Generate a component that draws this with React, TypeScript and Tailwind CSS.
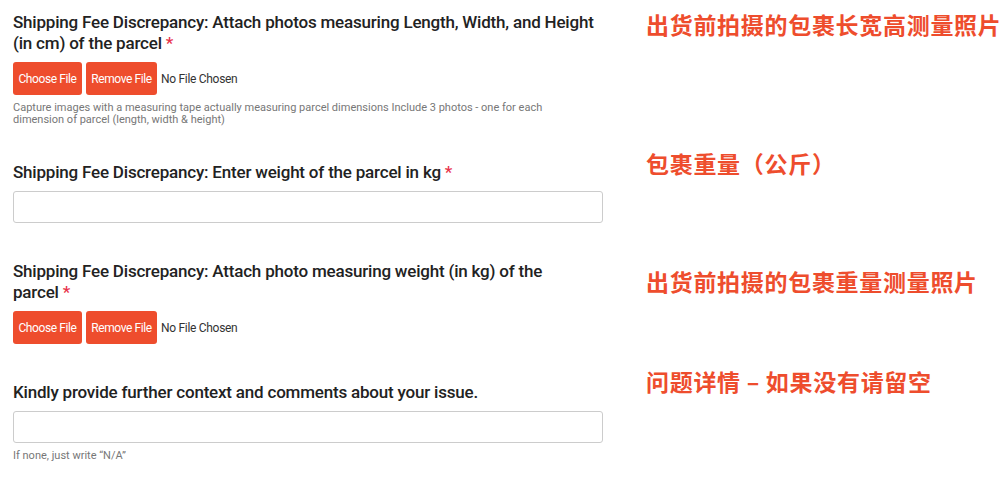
import React from "react";

const Req = () => <span className="text-[#e8334a]"> *</span>;
const Tail = ({ w }: { w: string }) => (
  <span className="whitespace-nowrap">
    {w}
    <Req />
  </span>
);

function FileRow() {
  return (
    <div className="mt-2 flex items-center gap-1">
      <button className="h-[33px] w-[69px] rounded-[3px] bg-[#ee4d2d] text-[12px] tracking-[-0.4px] text-white">Choose File</button>
      <button className="h-[33px] w-[71px] rounded-[3px] bg-[#ee4d2d] text-[12px] tracking-[-0.4px] text-white">Remove File</button>
      <span className="text-[12px] tracking-[-0.3px] text-[#333]">No File Chosen</span>
    </div>
  );
}

function Input() {
  return <div className="mt-2 h-[32px] w-full rounded-[3px] border border-[#cccccc] bg-white" />;
}

const cn = "text-[23px] tracking-[0.7px] font-bold text-[#ee4d2d] leading-[28px] whitespace-nowrap";
const hd = "text-[17px] font-medium leading-[21px] text-[#222] tracking-[-0.2px]";
const cjk = { fontFamily: "'Noto Sans CJK SC', sans-serif" };

export default function App() {
  return (
    <div
      className="min-h-[480px] w-[1006px] bg-white pl-[13px] pt-[12px]"
      style={{ fontFamily: "Roboto, 'Noto Sans CJK SC', sans-serif" }}
    >
      <div className="grid grid-cols-[590px_1fr] gap-x-[43px]">
        <div>
          <div className={hd}>
            Shipping Fee Discrepancy: Attach photos measuring Length, Width, and Height (in cm) of the <Tail w="parcel" />
          </div>
          <FileRow />
          <div className="mt-[7px] max-w-[560px] text-[11px] leading-[12px] text-[#777]">
            Capture images with a measuring tape actually measuring parcel dimensions Include 3 photos - one for each dimension of parcel (length, width &amp; height)
          </div>
        </div>
        <div className={`${cn} mt-[-2px]`} style={cjk}>出货前拍摄的包裹长宽高测量照片</div>

        <div className="mt-[36px]">
          <div className={hd}>
            Shipping Fee Discrepancy: Enter weight of the parcel in <Tail w="kg" />
          </div>
          <Input />
        </div>
        <div className={`${cn} mt-[23px]`} style={cjk}>包裹重量（公斤）</div>

        <div className="mt-[38px]">
          <div className={hd}>
            Shipping Fee Discrepancy: Attach photo measuring weight (in kg) of the <Tail w="parcel" />
          </div>
          <FileRow />
        </div>
        <div className={`${cn} mt-[44px]`} style={cjk}>出货前拍摄的包裹重量测量照片</div>

        <div className="mt-[38px]">
          <div className={hd}>
            Kindly provide further context and comments about your issue.
          </div>
          <Input />
          <div className="mt-[7px] text-[11px] leading-[12px] text-[#777]">If none, just write “N/A”</div>
        </div>
        <div className={`${cn} mt-[23px]`} style={cjk}>问题详情 – 如果没有请留空</div>
      </div>
    </div>
  );
}
